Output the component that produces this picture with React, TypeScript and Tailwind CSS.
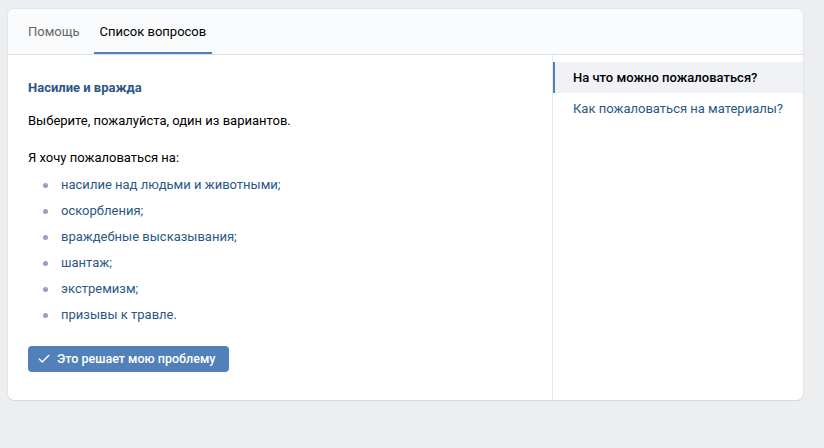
import { Check } from "lucide-react";

const ITEMS = [
  "насилие над людьми и животными;",
  "оскорбления;",
  "враждебные высказывания;",
  "шантаж;",
  "экстремизм;",
  "призывы к травле.",
];

const FAQ = [
  { title: "На что можно пожаловаться?", active: true },
  { title: "Как пожаловаться на материалы?", active: false },
];

export default function App() {
  return (
    <div className="min-h-[448px] bg-[#edeef0] pt-[9px] pl-2 font-['Roboto',_'Noto_Sans',_sans-serif] text-[13px] leading-[18px]">
      <div className="w-[795px] overflow-hidden rounded-[6px] bg-white shadow-[0_1px_0_0_#d7d8db,0_0_0_1px_#e3e4e8]">
        <div className="flex h-[46px] border-b border-[#dce1e6] bg-[#fafbfc] pl-[15px]">
          <div className="flex items-center px-[5px] text-[#656565]">Помощь</div>
          <div className="ml-[9px] flex items-center border-b-2 border-[#5181b8] px-[6px] pt-[2px] text-black">
            Список вопросов
          </div>
        </div>
        <div className="flex">
          <div className="w-[545px] border-r border-[#e7e8ec] px-5 pt-[24px] pb-[28px]">
            <div className="font-bold text-[#2a5885]">Насилие и вражда</div>
            <p className="mt-[15px] text-black">Выберите, пожалуйста, один из вариантов.</p>
            <p className="mt-[19px] text-black">Я хочу пожаловаться на:</p>
            <ul className="mt-[9px] flex flex-col gap-2">
              {ITEMS.map((item) => (
                <li key={item} className="flex items-center text-[#2a5885]">
                  <span className="ml-[15px] mr-[13px] h-[5px] w-[5px] rounded-full bg-[#93a3bc]" />
                  {item}
                </li>
              ))}
            </ul>
            <button
              type="button"
              className="mt-[22px] flex h-[26px] items-center gap-[6px] rounded-[4px] bg-[#5181b8] pl-[9px] pr-[14px] text-[12.5px] font-medium text-white"
            >
              <Check size={14} strokeWidth={2.5} />
              Это решает мою проблему
            </button>
          </div>
          <div className="flex-1 pt-[7px]">
            {FAQ.map((f) => (
              <div
                key={f.title}
                className={
                  f.active
                    ? "flex h-[31px] items-center border-l-2 border-[#5181b8] bg-[#f0f2f5] pl-[18px] font-medium text-black"
                    : "flex h-[31px] items-center border-l-2 border-transparent pl-[18px] text-[#2a5885]"
                }
              >
                {f.title}
              </div>
            ))}
          </div>
        </div>
      </div>
    </div>
  );
}
